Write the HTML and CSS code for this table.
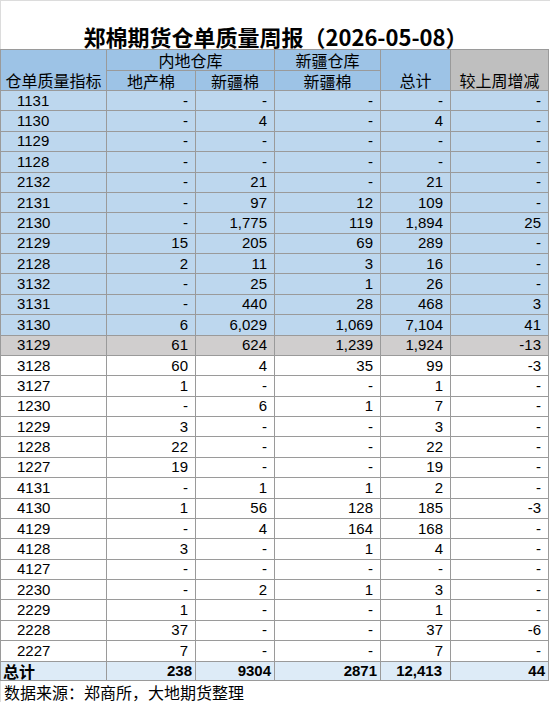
FILE: index.html
```html
<!DOCTYPE html>
<html lang="zh">
<head>
<meta charset="utf-8">
<title>郑棉期货仓单质量周报</title>
<link rel="stylesheet" href="styles.css">
</head>
<body>
<div class="sheet">
  <h1 class="title">郑棉期货仓单质量周报（2026-05-08）</h1>
  <table class="report">
    <colgroup>
      <col class="c1"><col class="c2"><col class="c3"><col class="c4"><col class="c5"><col class="c6">
    </colgroup>
    <thead>
      <tr class="h1">
        <th rowspan="2" class="bottom">仓单质量指标</th>
        <th colspan="2">内地仓库</th>
        <th>新疆仓库</th>
        <th rowspan="2" class="bottom">总计</th>
        <th rowspan="2" class="bottom gray">较上周增减</th>
      </tr>
      <tr class="h2">
        <th>地产棉</th>
        <th>新疆棉</th>
        <th>新疆棉</th>
      </tr>
    </thead>
    <tbody>
      <tr class="blue"><td>1131</td><td>-</td><td>-</td><td>-</td><td>-</td><td>-</td></tr>
      <tr class="blue"><td>1130</td><td>-</td><td>4</td><td>-</td><td>4</td><td>-</td></tr>
      <tr class="blue"><td>1129</td><td>-</td><td>-</td><td>-</td><td>-</td><td>-</td></tr>
      <tr class="blue"><td>1128</td><td>-</td><td>-</td><td>-</td><td>-</td><td>-</td></tr>
      <tr class="blue"><td>2132</td><td>-</td><td>21</td><td>-</td><td>21</td><td>-</td></tr>
      <tr class="blue"><td>2131</td><td>-</td><td>97</td><td>12</td><td>109</td><td>-</td></tr>
      <tr class="blue"><td>2130</td><td>-</td><td>1,775</td><td>119</td><td>1,894</td><td>25</td></tr>
      <tr class="blue"><td>2129</td><td>15</td><td>205</td><td>69</td><td>289</td><td>-</td></tr>
      <tr class="blue"><td>2128</td><td>2</td><td>11</td><td>3</td><td>16</td><td>-</td></tr>
      <tr class="blue"><td>3132</td><td>-</td><td>25</td><td>1</td><td>26</td><td>-</td></tr>
      <tr class="blue"><td>3131</td><td>-</td><td>440</td><td>28</td><td>468</td><td>3</td></tr>
      <tr class="blue"><td>3130</td><td>6</td><td>6,029</td><td>1,069</td><td>7,104</td><td>41</td></tr>
      <tr class="hl"><td>3129</td><td>61</td><td>624</td><td>1,239</td><td>1,924</td><td>-13</td></tr>
      <tr><td>3128</td><td>60</td><td>4</td><td>35</td><td>99</td><td>-3</td></tr>
      <tr><td>3127</td><td>1</td><td>-</td><td>-</td><td>1</td><td>-</td></tr>
      <tr><td>1230</td><td>-</td><td>6</td><td>1</td><td>7</td><td>-</td></tr>
      <tr><td>1229</td><td>3</td><td>-</td><td>-</td><td>3</td><td>-</td></tr>
      <tr><td>1228</td><td>22</td><td>-</td><td>-</td><td>22</td><td>-</td></tr>
      <tr><td>1227</td><td>19</td><td>-</td><td>-</td><td>19</td><td>-</td></tr>
      <tr><td>4131</td><td>-</td><td>1</td><td>1</td><td>2</td><td>-</td></tr>
      <tr><td>4130</td><td>1</td><td>56</td><td>128</td><td>185</td><td>-3</td></tr>
      <tr><td>4129</td><td>-</td><td>4</td><td>164</td><td>168</td><td>-</td></tr>
      <tr><td>4128</td><td>3</td><td>-</td><td>1</td><td>4</td><td>-</td></tr>
      <tr><td>4127</td><td>-</td><td>-</td><td>-</td><td>-</td><td>-</td></tr>
      <tr><td>2230</td><td>-</td><td>2</td><td>1</td><td>3</td><td>-</td></tr>
      <tr><td>2229</td><td>1</td><td>-</td><td>-</td><td>1</td><td>-</td></tr>
      <tr><td>2228</td><td>37</td><td>-</td><td>-</td><td>37</td><td>-6</td></tr>
      <tr><td>2227</td><td>7</td><td>-</td><td>-</td><td>7</td><td>-</td></tr>
    </tbody>
    <tfoot>
      <tr class="total"><td>总计</td><td>238</td><td>9304</td><td>2871</td><td class="fmt">12,413</td><td>44</td></tr>
    </tfoot>
  </table>
  <p class="source">数据来源：郑商所，大地期货整理</p>
</div>
</body>
</html>
```
FILE: styles.css
```css
html, body {
  margin: 0;
  padding: 0;
  background: #fff;
}

.sheet {
  width: 549px;
  height: 701px;
  border-top: 1px solid #dcdcdc;
  border-left: 1px solid #dcdcdc;
  font-family: "Liberation Sans", "Noto Sans CJK SC", sans-serif;
  color: #000;
}

.title {
  margin: 0;
  height: 48px;
  box-sizing: border-box;
  padding-top: 22px;
  font-family: "Noto Sans CJK SC", sans-serif;
  font-weight: 700;
  font-size: 22px;
  line-height: 26px;
  text-align: center;
  white-space: nowrap;
}

.report {
  table-layout: fixed;
  width: 549px;
  border-collapse: separate;
  border-spacing: 0;
  border-top: 1px solid #9a9a9a;
  border-left: 1px solid #9a9a9a;
  margin-left: -1px;
}

.c1 { width: 106px; }
.c2 { width: 89px; }
.c3 { width: 79px; }
.c4 { width: 106px; }
.c5 { width: 70px; }
.c6 { width: 98px; }

.report th,
.report td {
  border-right: 1px solid #9a9a9a;
  border-bottom: 1px solid #9a9a9a;
  padding: 0;
  white-space: nowrap;
}

.report th {
  background: #9dc3e6;
  font-family: "Noto Sans CJK SC", sans-serif;
  font-weight: 400;
  font-size: 16px;
  line-height: 18px;
  text-align: center;
}

.report th.bottom {
  vertical-align: bottom;
  padding-bottom: 1px;
}

.report th.gray {
  background: #bfbfbf;
}

.h1 { height: 21px; }
.h2 { height: 20px; }

.report tbody tr {
  height: 20.39px;
}

.report td {
  font-size: 15px;
  line-height: 16px;
  text-align: right;
  padding-right: 7px;
}

.report td:first-child {
  text-align: left;
  padding-left: 16px;
  padding-right: 0;
}

.report tr.blue td { background: #bdd7ee; }
.report tr.hl td { background: #d0cece; }

.report tr.total {
  height: 19px;
}

.report tr.total td {
  background: #ddebf7;
  font-weight: 700;
  padding-right: 3px;
}

.report tr.total td.fmt {
  padding-right: 8px;
}

.report tr.total td:first-child {
  font-family: "Noto Sans CJK SC", sans-serif;
  font-size: 16px;
  padding-left: 2px;
}

.source {
  margin: 0;
  padding: 2px 0 0 3px;
  font-family: "Noto Sans CJK SC", sans-serif;
  font-size: 16px;
  line-height: 18px;
}
```
